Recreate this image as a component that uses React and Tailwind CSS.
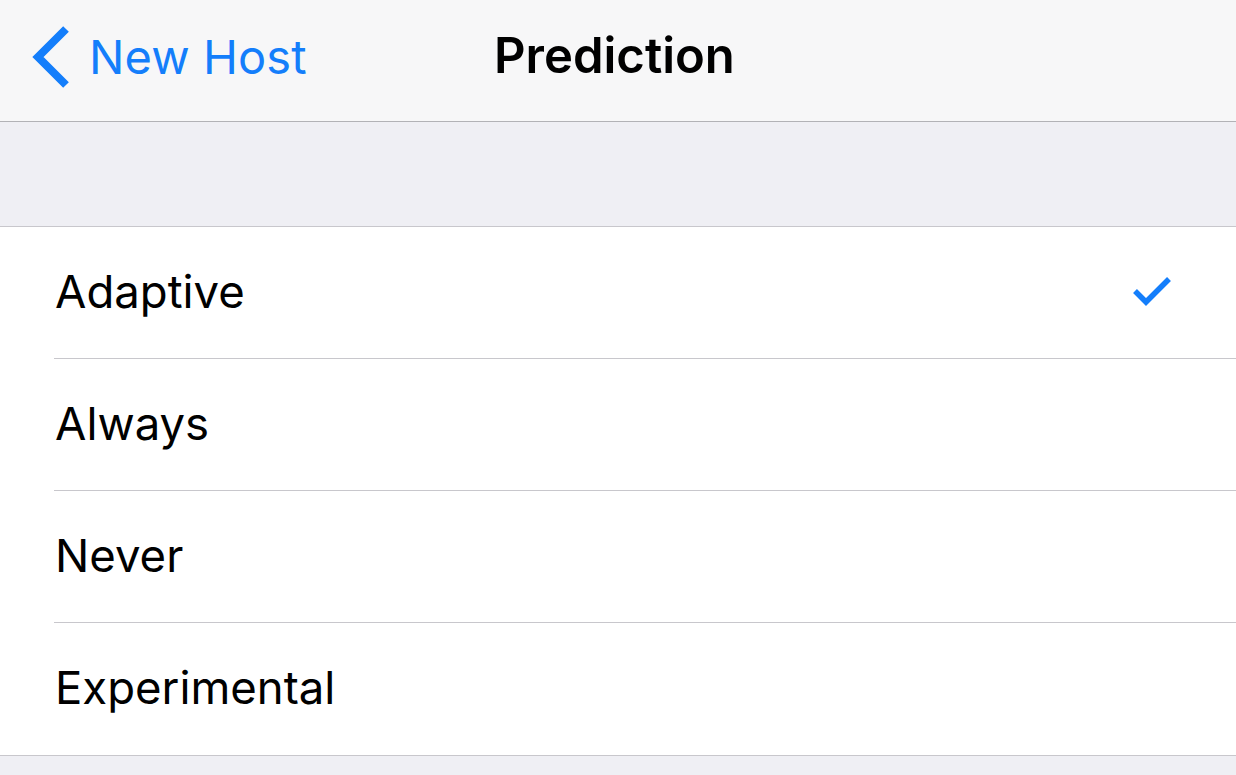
import React from 'react';

const options = ['Adaptive', 'Always', 'Never', 'Experimental'];

export default function App() {
  const selected = 'Adaptive';

  return (
    <div className="w-[1236px] h-[775px] overflow-hidden bg-[#efeff4]" style={{ fontFamily: 'Inter, "Noto Sans", sans-serif' }}>
      {/* nav bar */}
      <div className="relative h-[122px] bg-[#f7f7f8] border-b border-[#b2b2b6] flex items-center">
        <div className="flex items-center pl-[31px] gap-[18px] text-[#147efb]">
          <svg width="40" height="64" viewBox="0 0 40 64" className="mt-[-8px]">
            <path d="M35 4 L7 32 L35 60" fill="none" stroke="currentColor" strokeWidth="8" strokeLinecap="butt" strokeLinejoin="miter" />
          </svg>
          <span className="text-[47px] leading-none tracking-[0.1px] mt-[-8px]">New Host</span>
        </div>
        <div className="absolute left-[494px] top-[31px] text-[49px] font-semibold leading-none text-black tracking-[0px]">
          Prediction
        </div>
      </div>

      {/* spacer */}
      <div className="h-[104px]" />

      {/* list */}
      <div className="bg-white border-y border-[#c8c7cc]">
        {options.map((opt, i) => (
          <div key={opt} className="pl-[54px]">
            <div
              className={
                'h-[132px] flex items-center justify-between pr-[64px] ' +
                (i < options.length - 1 ? 'border-b border-[#c8c7cc]' : '')
              }
            >
              <span className="text-[45.5px] leading-none text-black ml-[1px] mt-[-2px]">{opt}</span>
              {opt === selected && (
                <svg width="40" height="30" viewBox="0 0 40 30" className="text-[#147efb] mt-[-4px]">
                  <path d="M3 15 L14 26 L37 3" fill="none" stroke="currentColor" strokeWidth="5.5" />
                </svg>
              )}
            </div>
          </div>
        ))}
      </div>
    </div>
  );
}
